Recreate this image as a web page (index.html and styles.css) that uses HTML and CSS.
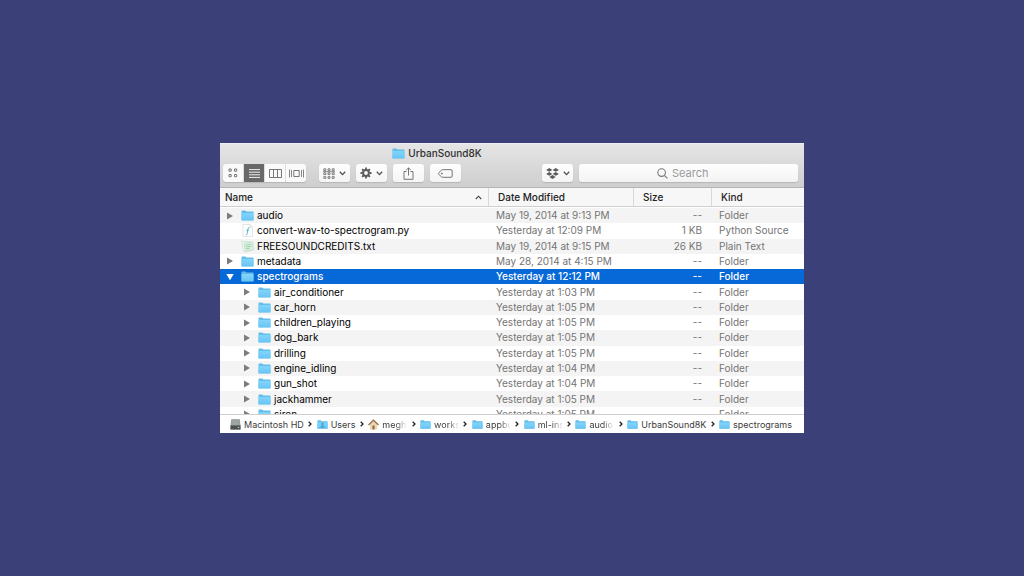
FILE: index.html
```html
<!DOCTYPE html>
<html lang="en">
<head>
<meta charset="utf-8">
<title>UrbanSound8K</title>
<link rel="stylesheet" href="styles.css">
</head>
<body>
<svg class="sprite" aria-hidden="true">
  <defs>
    <linearGradient id="folder-fill" x1="0" y1="0" x2="0" y2="1"><stop offset="0" stop-color="#82d5fb"/><stop offset="1" stop-color="#69c5f4"/></linearGradient>
    <symbol id="folder" viewBox="0 0 13 11"><path d="M.5 1.2Q.5.5 1.2.5H4.3L5.4 1.6H11.9Q12.5 1.6 12.5 2.2V9.9Q12.5 10.5 11.9 10.5H1.1Q.5 10.5.5 9.9Z" fill="#62bdeb"/><path d="M.5 3H12.5V9.6Q12.5 10.2 11.9 10.2H1.1Q.5 10.2.5 9.6Z" fill="url(#folder-fill)"/></symbol>
    <symbol id="chevron-down" viewBox="0 0 7 5"><path d="M.8.8 3.5 3.6 6.2.8" fill="none" stroke="#4d4d4d" stroke-width="1.3"/></symbol>
    <symbol id="closed" viewBox="0 0 7 8"><path d="M.5.5 6.5 4 .5 7.5Z" fill="currentColor"/></symbol>
    <symbol id="chevron-right" viewBox="0 0 4 6"><path d="M.7.7 3 3 .7 5.3" fill="none" stroke="#222" stroke-width="1.3"/></symbol>
  </defs>
</svg>
<main class="window">
  <header class="titlebar">
    <h1 class="title"><svg class="folder"><use href="#folder"/></svg>UrbanSound8K</h1>
    <div class="toolbar">
      <div class="views">
        <button class="view" aria-label="Icons"><svg width="10" height="10" viewBox="0 0 10 10" fill="none" stroke="#777"><path d="M1 1h2.2v2.2H1zM6.5 1h2.2v2.2H6.5zM1 6.5h2.2v2.2H1zM6.5 6.5h2.2v2.2H6.5z"/></svg></button>
        <button class="view active" aria-label="List"><svg width="11" height="9" viewBox="0 0 11 9" stroke="#fff"><path d="M0 .6h11M0 3.2h11M0 5.8h11M0 8.4h11" stroke-width=".9"/></svg></button>
        <button class="view" aria-label="Columns"><svg width="13" height="9" viewBox="0 0 13 9" fill="none" stroke="#777"><path d="M.5.5h12v8H.5zM4.5.5v8M8.5.5v8"/></svg></button>
        <button class="view" aria-label="Cover flow"><svg width="15" height="9" viewBox="0 0 15 9" fill="none" stroke="#777"><path d="M4.8 1.5h5.4v6H4.8z"/><path d="M.5.5v8M2.5 1v7M12.5 1v7M14.5.5v8" stroke-width=".9"/></svg></button>
      </div>
      <div class="actions">
        <button class="tool" aria-label="Arrange"><svg width="12" height="11" viewBox="0 0 12 11" fill="none" stroke="#666" stroke-width=".8"><path d="M.8.8h2v1.8h-2zM5 .8h2v1.8H5zM9.2.8h2v1.8h-2zM.8 4.8h2v1.8h-2zM5 4.8h2v1.8H5zM9.2 4.8h2v1.8h-2zM.8 8.6h2v1.8h-2zM5 8.6h2v1.8H5zM9.2 8.6h2v1.8h-2zM0 3.7h12"/></svg><svg class="caret"><use href="#chevron-down"/></svg></button>
        <button class="tool" aria-label="Action"><svg width="12" height="12" viewBox="-6 -6 12 12" fill="none" stroke="#5c5c5c"><circle r="2.9" stroke-width="2"/><path d="M0-3.5V-5.5M0 3.5V5.5M3.5 0H5.5M-3.5 0H-5.5M2.5-2.5 3.9-3.9M-2.5 2.5-3.9 3.9M2.5 2.5 3.9 3.9M-2.5-2.5-3.9-3.9" stroke-width="1.8"/></svg><svg class="caret"><use href="#chevron-down"/></svg></button>
        <button class="tool" aria-label="Share"><svg width="11" height="13" viewBox="0 0 11 13" fill="none" stroke="#666" stroke-width=".9"><path d="M3.5 4.5H1v7.8h9V4.5H7.5M5.5 8.5V1M3.2 3.1 5.5.8 7.8 3.1"/></svg></button>
        <button class="tool" aria-label="Tags"><svg width="15" height="9" viewBox="0 0 15 9" fill="none" stroke="#666" stroke-width=".9"><path d="M4.5.7H13Q14.2.7 14.2 1.9V7.1Q14.2 8.3 13 8.3H4.5Q3.8 8.3 3.2 7.7L.8 5.1Q.3 4.5.8 3.9L3.2 1.3Q3.8.7 4.5.7Z"/><circle cx="3.9" cy="4.5" r=".6"/></svg></button>
      </div>
      <button class="tool" aria-label="Dropbox"><svg width="13" height="11" viewBox=".6 .2 11.8 10.2" fill="#5c5c5c"><path d="M3.5.3 6.4 2 3.5 3.7.6 2ZM9.5.3 12.4 2 9.5 3.7 6.6 2ZM3.5 4 6.4 5.7 3.5 7.4.6 5.7ZM9.5 4 12.4 5.7 9.5 7.4 6.6 5.7ZM6.5 6.8 9.4 8.5 6.5 10.3 3.6 8.5Z"/></svg><svg class="caret"><use href="#chevron-down"/></svg></button>
      <label class="search"><svg width="11" height="11" viewBox="0 0 11 11" fill="none" stroke="#777" stroke-width="1.1"><circle cx="4.6" cy="4.6" r="3.8"/><path d="M7.3 7.3 10.4 10.4"/></svg><input type="search" placeholder="Search" aria-label="Search"></label>
    </div>
  </header>
  <section class="list">
    <table class="files">
      <colgroup><col><col class="col-date"><col class="col-size"><col class="col-kind"></colgroup>
      <thead><tr>
        <th scope="col"><div class="heading">Name<svg width="7" height="5" viewBox="0 0 7 5"><path d="M.8 4 3.5 1.2 6.2 4" fill="none" stroke="#444" stroke-width="1.1"/></svg></div></th>
        <th scope="col"><div class="heading">Date Modified</div></th>
        <th scope="col"><div class="heading">Size</div></th>
        <th scope="col"><div class="heading">Kind</div></th>
      </tr></thead>
      <tbody>
        <tr><td><div class="name"><button class="toggle" aria-label="Expand"><svg><use href="#closed"/></svg></button><svg class="folder"><use href="#folder"/></svg>audio</div></td><td>May 19, 2014 at 9:13 PM</td><td>--</td><td>Folder</td></tr>
        <tr><td><div class="name"><span class="toggle"></span><svg class="document" viewBox="0 0 13 13"><path d="M2 .5h7l2.5 2.5v9.5H2z" fill="#fff" stroke="#d4d4d4" stroke-width=".6"/><path d="M9 .5V3h2.5" fill="none" stroke="#ccc" stroke-width=".6"/><path d="M8.7 3.5Q7 3.3 6.9 5.3L6.2 9.5Q6 10.8 4.8 10.8M5.3 6.2H8" fill="none" stroke="#42b6c9" stroke-width=".9"/></svg>convert-wav-to-spectrogram.py</div></td><td>Yesterday at 12:09 PM</td><td>1 KB</td><td>Python Source</td></tr>
        <tr><td><div class="name"><span class="toggle"></span><svg class="document" viewBox="0 0 13 13"><path d="M.5 1.2 9.5 2v9L3 11.8Z" fill="#f4faf5" stroke="#b9d9c3" stroke-width=".6"/><path d="M3 3.3 11.5 2.2 12.5 9.8 4.5 10.5Z" fill="#e3f3e7" stroke="#a3d3b1" stroke-width=".6"/><path d="M4.5 5 10.5 4.5M4.8 6.8 10.8 6.3M5 8.5 9 8.2" stroke="#8fcaa0" stroke-width=".8"/></svg>FREESOUNDCREDITS.txt</div></td><td>May 19, 2014 at 9:15 PM</td><td>26 KB</td><td>Plain Text</td></tr>
        <tr><td><div class="name"><button class="toggle" aria-label="Expand"><svg><use href="#closed"/></svg></button><svg class="folder"><use href="#folder"/></svg>metadata</div></td><td>May 28, 2014 at 4:15 PM</td><td>--</td><td>Folder</td></tr>
        <tr class="selected"><td><div class="name"><button class="toggle open" aria-label="Collapse"><svg viewBox="0 0 8 7"><path d="M.3.5H7.7L4 6.7Z" fill="#fff"/></svg></button><svg class="folder"><use href="#folder"/></svg>spectrograms</div></td><td>Yesterday at 12:12 PM</td><td>--</td><td>Folder</td></tr>
        <tr><td><div class="name child"><button class="toggle" aria-label="Expand"><svg><use href="#closed"/></svg></button><svg class="folder"><use href="#folder"/></svg>air_conditioner</div></td><td>Yesterday at 1:03 PM</td><td>--</td><td>Folder</td></tr>
        <tr><td><div class="name child"><button class="toggle" aria-label="Expand"><svg><use href="#closed"/></svg></button><svg class="folder"><use href="#folder"/></svg>car_horn</div></td><td>Yesterday at 1:05 PM</td><td>--</td><td>Folder</td></tr>
        <tr><td><div class="name child"><button class="toggle" aria-label="Expand"><svg><use href="#closed"/></svg></button><svg class="folder"><use href="#folder"/></svg>children_playing</div></td><td>Yesterday at 1:05 PM</td><td>--</td><td>Folder</td></tr>
        <tr><td><div class="name child"><button class="toggle" aria-label="Expand"><svg><use href="#closed"/></svg></button><svg class="folder"><use href="#folder"/></svg>dog_bark</div></td><td>Yesterday at 1:05 PM</td><td>--</td><td>Folder</td></tr>
        <tr><td><div class="name child"><button class="toggle" aria-label="Expand"><svg><use href="#closed"/></svg></button><svg class="folder"><use href="#folder"/></svg>drilling</div></td><td>Yesterday at 1:05 PM</td><td>--</td><td>Folder</td></tr>
        <tr><td><div class="name child"><button class="toggle" aria-label="Expand"><svg><use href="#closed"/></svg></button><svg class="folder"><use href="#folder"/></svg>engine_idling</div></td><td>Yesterday at 1:04 PM</td><td>--</td><td>Folder</td></tr>
        <tr><td><div class="name child"><button class="toggle" aria-label="Expand"><svg><use href="#closed"/></svg></button><svg class="folder"><use href="#folder"/></svg>gun_shot</div></td><td>Yesterday at 1:04 PM</td><td>--</td><td>Folder</td></tr>
        <tr><td><div class="name child"><button class="toggle" aria-label="Expand"><svg><use href="#closed"/></svg></button><svg class="folder"><use href="#folder"/></svg>jackhammer</div></td><td>Yesterday at 1:05 PM</td><td>--</td><td>Folder</td></tr>
        <tr><td><div class="name child"><button class="toggle" aria-label="Expand"><svg><use href="#closed"/></svg></button><svg class="folder"><use href="#folder"/></svg>siren</div></td><td>Yesterday at 1:05 PM</td><td>--</td><td>Folder</td></tr>
      </tbody>
    </table>
  </section>
  <nav class="path" aria-label="Path">
    <a class="crumb" href="#"><svg class="place" viewBox="0 0 11 11"><path d="M1.3.3h8.4L10.5 6.5v4H.5v-4Z" fill="#8b9291"/><path d="M1.8.8h7.4L10 6H1Z" fill="#9da4a2"/><path d="M.5 6.5h10v4H.5z" fill="#4c5251"/><path d="M7.8 8.5h1.4" stroke="#bfe3c4"/></svg><span>Macintosh HD</span></a>
    <svg class="separator"><use href="#chevron-right"/></svg>
    <a class="crumb" href="#"><svg class="place" viewBox="0 0 11 11"><use href="#folder" width="11" height="11"/><circle cx="5.5" cy="5" r="1.2" fill="#3e9fd0"/><path d="M3.3 8.5Q3.5 6.5 5.5 6.5T7.7 8.5Z" fill="#3e9fd0"/></svg><span>Users</span></a>
    <svg class="separator"><use href="#chevron-right"/></svg>
    <a class="crumb" href="#"><svg class="place" viewBox="0 0 11 11"><path d="M2 5.2 5.5 2 9 5.2v5.3H2z" fill="#e9d7b5"/><path d="M.5 6 5.5 1.2 10.5 6" fill="none" stroke="#9b7350" stroke-width="1.5"/><path d="M4.4 6.5h2.2v4H4.4z" fill="#9b693d"/></svg><span class="short">megha</span></a>
    <svg class="separator"><use href="#chevron-right"/></svg>
    <a class="crumb" href="#"><svg class="place"><use href="#folder"/></svg><span class="short">works</span></a>
    <svg class="separator"><use href="#chevron-right"/></svg>
    <a class="crumb" href="#"><svg class="place"><use href="#folder"/></svg><span class="short">appbu</span></a>
    <svg class="separator"><use href="#chevron-right"/></svg>
    <a class="crumb" href="#"><svg class="place"><use href="#folder"/></svg><span class="short">ml-ins</span></a>
    <svg class="separator"><use href="#chevron-right"/></svg>
    <a class="crumb" href="#"><svg class="place"><use href="#folder"/></svg><span class="short">audio</span></a>
    <svg class="separator"><use href="#chevron-right"/></svg>
    <a class="crumb" href="#"><svg class="place"><use href="#folder"/></svg><span>UrbanSound8K</span></a>
    <svg class="separator"><use href="#chevron-right"/></svg>
    <a class="crumb" href="#"><svg class="place"><use href="#folder"/></svg><span>spectrograms</span></a>
  </nav>
</main>
</body>
</html>
```
FILE: styles.css
```css
* { box-sizing: border-box; }
body {
  margin: 0;
  min-height: 100vh;
  display: flex;
  align-items: center;
  justify-content: center;
  background: #3b4079;
  font-family: Inter, "Liberation Sans", sans-serif;
  font-size: 10px;
  color: #222;
}
button { margin: 0; padding: 0; border: 0; background: none; font: inherit; color: inherit; }
svg { flex: none; }
.sprite { position: absolute; width: 0; height: 0; }
.window { width: 100%; max-width: 584px; background: #fff; }

.titlebar {
  padding: 3px 6px 5px 3px;
  background: linear-gradient(#e5e5e5, #cecece);
  border-top: 1px solid #eeeef0;
  border-bottom: 1px solid #b4b4b4;
}
.title {
  display: flex;
  align-items: center;
  justify-content: center;
  gap: 3px;
  margin: 0;
  padding-right: 147px;
  font-size: 10px;
  line-height: 13px;
  font-weight: 500;
  color: #303030;
}
.folder { width: 13px; height: 11px; }
.toolbar { display: flex; align-items: center; gap: 6px; padding-top: 4px; }
.views {
  display: flex;
  border-radius: 3px;
  overflow: hidden;
  background: #fafafa;
  box-shadow: 0 1px 1px #b5b5b5;
}
.view { display: flex; align-items: center; justify-content: center; width: 21px; height: 18px; border-left: 1px solid #ddd; }
.view:first-child { width: 20px; border-left: 0; }
.view.active { background: #686868; }
.actions { display: flex; flex: 1; gap: 6px; margin-left: 7px; }
.tool {
  display: flex;
  align-items: center;
  justify-content: center;
  gap: 4px;
  width: 31px;
  height: 18px;
  border-radius: 3px;
  background: linear-gradient(#fefefe, #f5f5f5);
  box-shadow: 0 1px 1px #b5b5b5;
}
.caret { width: 7px; height: 5px; }
.search {
  display: flex;
  align-items: center;
  justify-content: center;
  gap: 4px;
  flex: 0 1 219px;
  height: 18px;
  border-radius: 3px;
  background: linear-gradient(#fefefe, #f3f3f3);
  box-shadow: 0 1px 1px #b5b5b5;
}
.search input { width: 48px; padding: 0; border: 0; outline: 0; background: none; font: inherit; font-size: 11px; }
.search input::placeholder { color: #9a9a9a; }

.list { height: 226px; overflow: hidden; }
.files { width: 100%; height: 234px; table-layout: fixed; border-collapse: collapse; }
.col-date { width: 145px; }
.col-size { width: 78px; }
.col-kind { width: 93px; }
.files th { height: 20px; padding: 0; font-weight: 500; text-align: left; vertical-align: top; }
.heading {
  display: flex;
  align-items: center;
  justify-content: space-between;
  height: 19px;
  padding: 0 6px 0 9px;
  border-left: 1px solid #d8d8d8;
  border-bottom: 1px solid #cfcfcf;
  background: #f7f7f7;
}
th:first-child .heading { padding-left: 5px; border-left: 0; }
.files td { padding: 0 0 0 8px; line-height: 13px; white-space: nowrap; color: #747474; }
.files td:first-child { padding-left: 6px; color: #000; }
.files td:nth-child(3) { padding-right: 9px; text-align: right; }
.files tbody tr:nth-child(odd) { background: #f4f4f4; }
.files .selected td, .files .selected td:first-child { background: #0768d8; color: #fff; font-weight: 500; }
.name { display: flex; align-items: center; gap: 3px; }
.child { padding-left: 17px; }
.toggle { display: flex; width: 12px; color: #7c7c7c; }
.toggle svg { width: 8px; height: 8px; }
.document { width: 13px; height: 13px; }

.path {
  display: flex;
  align-items: center;
  justify-content: space-between;
  height: 19px;
  padding: 0 12px 0 10px;
  border-top: 1px solid #cfcfcf;
  font-size: 9px;
}
.crumb { display: flex; align-items: center; gap: 3px; color: #3c3c3c; text-decoration: none; white-space: nowrap; }
.place { width: 11px; height: 11px; }
.short { width: 25px; overflow: hidden; mask-image: linear-gradient(90deg, #000 55%, transparent); }
.separator { width: 4px; height: 6px; }
```
